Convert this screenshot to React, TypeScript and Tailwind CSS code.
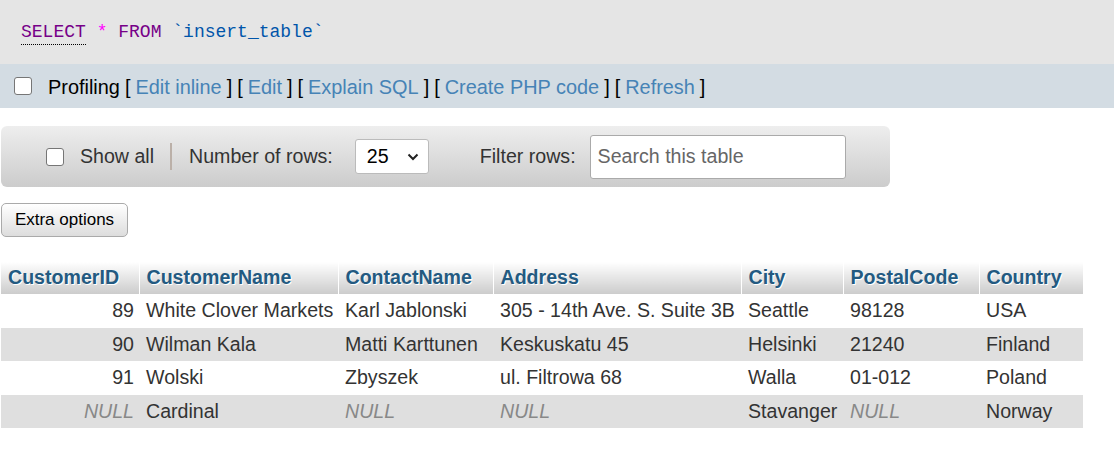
const columns = [
  { name: "CustomerID", width: "w-[138px]" },
  { name: "CustomerName", width: "w-[199px]" },
  { name: "ContactName", width: "w-[155px]" },
  { name: "Address", width: "w-[248px]" },
  { name: "City", width: "w-[102px]" },
  { name: "PostalCode", width: "w-[136px]" },
  { name: "Country", width: "w-[104px]" },
]

const rows: (string | null)[][] = [
  ["89", "White Clover Markets", "Karl Jablonski", "305 - 14th Ave. S. Suite 3B", "Seattle", "98128", "USA"],
  ["90", "Wilman Kala", "Matti Karttunen", "Keskuskatu 45", "Helsinki", "21240", "Finland"],
  ["91", "Wolski", "Zbyszek", "ul. Filtrowa 68", "Walla", "01-012", "Poland"],
  [null, "Cardinal", null, null, "Stavanger", null, "Norway"],
]

function Checkbox() {
  return (
    <input
      type="checkbox"
      className="appearance-none block w-[18px] h-[18px] rounded-[3px] border border-[#767676] bg-white shrink-0"
    />
  )
}

export default function App() {
  return (
    <div className="w-[1114px] h-[450px] bg-white text-[#333] font-['Liberation_Sans',Arial,sans-serif] overflow-hidden">
      {/* Query */}
      <div className="h-[64px] bg-[#e5e5e5] flex items-center pl-[21px]">
        <code className="font-['Liberation_Mono','DejaVu_Sans_Mono',monospace] text-[18px] leading-none whitespace-pre">
          <span className="text-[#770088] border-b border-dotted border-black pb-[2px]">SELECT</span>
          <span> </span>
          <span className="text-[#ff00ff]">*</span>
          <span> </span>
          <span className="text-[#770088]">FROM</span>
          <span> </span>
          <span className="text-[#0055aa]">`insert_table`</span>
        </code>
      </div>

      {/* Profiling bar */}
      <div className="h-[44px] bg-[#d3dce3] flex items-center pl-[14px] text-[19.9px] text-black">
        <Checkbox />
        <span className="ml-[16px] pt-[3px]">Profiling</span>
        <span className="ml-[5px] pt-[3px]">[</span>
        <a className="mx-[5px] pt-[3px] text-[#4683b6]">Edit inline</a>
        <span className="pt-[3px]">]</span>
        <span className="ml-[5px] pt-[3px]">[</span>
        <a className="mx-[5px] pt-[3px] text-[#4683b6]">Edit</a>
        <span className="pt-[3px]">]</span>
        <span className="ml-[5px] pt-[3px]">[</span>
        <a className="mx-[5px] pt-[3px] text-[#4683b6]">Explain SQL</a>
        <span className="pt-[3px]">]</span>
        <span className="ml-[5px] pt-[3px]">[</span>
        <a className="mx-[5px] pt-[3px] text-[#4683b6]">Create PHP code</a>
        <span className="pt-[3px]">]</span>
        <span className="ml-[5px] pt-[3px]">[</span>
        <a className="mx-[5px] pt-[3px] text-[#4683b6]">Refresh</a>
        <span className="pt-[3px]">]</span>
      </div>

      {/* Navigation */}
      <div className="mt-[18px] ml-[1px] w-[889px] h-[61px] rounded-[6px] bg-gradient-to-b from-[#eeeeee] to-[#cccccc] flex items-center text-[19.6px] text-[#333]">
        <div className="ml-[45px]">
          <Checkbox />
        </div>
        <span className="ml-[16px]">Show all</span>
        <div className="ml-[16px] w-[2px] h-[27px] bg-[#bbb0a8]" />
        <span className="ml-[17px]">Number of rows:</span>
        <div className="ml-[22px] w-[74px] h-[35px] bg-white border border-[#bbb] rounded-[3px] flex items-center justify-between pl-[11px] pr-[9px] text-black">
          <span>25</span>
          <svg width="12" height="8" viewBox="0 0 12 8" fill="none">
            <path d="M1.5 1.5 L6 6 L10.5 1.5" stroke="#222" strokeWidth="2" />
          </svg>
        </div>
        <span className="ml-[51px]">Filter rows:</span>
        <input
          placeholder="Search this table"
          className="ml-[14px] w-[256px] h-[44px] bg-white border border-[#aaa] rounded-[3px] px-[7px] text-[19.6px] placeholder:text-[#666] outline-none"
        />
      </div>

      {/* Extra options */}
      <button className="mt-[16px] ml-[1px] h-[34px] w-[127px] rounded-[5px] border border-[#aaa] bg-gradient-to-b from-white to-[#dddddd] text-[17px] text-black">
        Extra options
      </button>

      {/* Data table */}
      <table className="mt-[25px] ml-[1px] w-[1082px] table-fixed border-collapse text-[19.6px]">
        <thead>
          <tr className="h-[32px]">
            {columns.map((c, i) => (
              <th
                key={c.name}
                className={`${c.width} text-left font-bold text-[#235a81] px-[7px] bg-gradient-to-b from-white to-[#cccccc] [text-shadow:1px_1px_0_#fff] ${i < columns.length - 1 ? "border-r border-white" : ""}`}
              >
                {c.name}
              </th>
            ))}
          </tr>
        </thead>
        <tbody>
          {rows.map((r, ri) => (
            <tr key={ri} className={`h-[33.5px] ${ri % 2 === 1 ? "bg-[#dfdfdf]" : "bg-white"}`}>
              {r.map((v, ci) => (
                <td
                  key={ci}
                  className={`px-[7px] whitespace-nowrap overflow-visible ${ci === 0 ? "text-right pr-[5px]" : "text-left"} ${v === null ? "italic text-[#888]" : "text-[#333]"}`}
                >
                  {v === null ? "NULL" : v}
                </td>
              ))}
            </tr>
          ))}
        </tbody>
      </table>
    </div>
  )
}
